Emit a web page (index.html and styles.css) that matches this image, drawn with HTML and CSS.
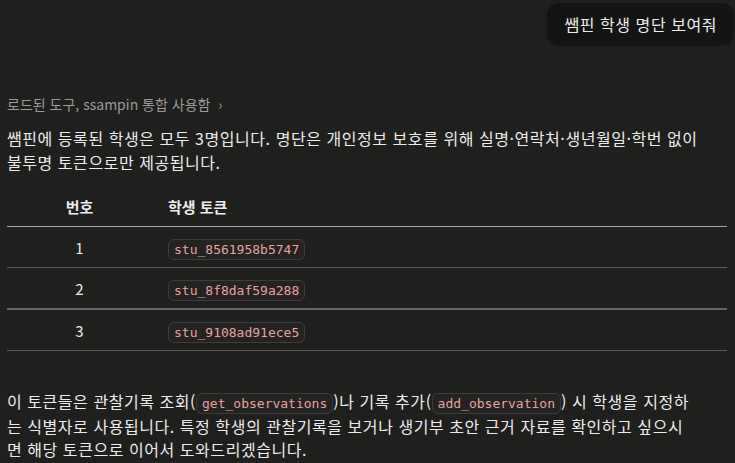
FILE: index.html
```html
<!DOCTYPE html>
<html lang="ko">
    <head>
        <meta charset="UTF-8" />
        <link rel="stylesheet" href="styles.css">
    </head>
    <body>
        <div class="chat">
            <div class="user_row">
                <div class="user_bubble">쌤핀 학생 명단 보여줘</div>
            </div>

            <div class="tool_line">로드된 도구, ssampin 통합 사용함 <span class="chev">&#8250;</span></div>

            <p class="answer">쌤핀에 등록된 학생은 모두 3명입니다. 명단은 개인정보 보호를 위해 실명·연락처·생년월일·학번 없이<br>불투명 토큰으로만 제공됩니다.</p>

            <table class="roster">
                <thead>
                    <tr><th class="col_num">번호</th><th class="col_token">학생 토큰</th></tr>
                </thead>
                <tbody>
                    <tr><td class="col_num">1</td><td class="col_token"><code>stu_8561958b5747</code></td></tr>
                    <tr class="thick"><td class="col_num">2</td><td class="col_token"><code>stu_8f8daf59a288</code></td></tr>
                    <tr><td class="col_num">3</td><td class="col_token"><code>stu_9108ad91ece5</code></td></tr>
                </tbody>
            </table>

            <p class="answer after">이 토큰들은 관찰기록 조회(<code>get_observations</code>)나 기록 추가(<code>add_observation</code>) 시 학생을 지정하<br>는 식별자로 사용됩니다. 특정 학생의 관찰기록을 보거나 생기부 초안 근거 자료를 확인하고 싶으시<br>면 해당 토큰으로 이어서 도와드리겠습니다.</p>
        </div>
    </body>
</html>
```

FILE: styles.css
```css
body {
    margin: 0;
    background-color: #1f1f1e;
    color: #ececec;
    font-family: "Noto Sans CJK KR", "Noto Sans", sans-serif;
    font-size: 16px;
}
.chat {
    padding: 3px 1px 0 7px;
}
.user_row {
    display: flex;
    justify-content: flex-end;
}
.user_bubble {
    background-color: #141414;
    border-radius: 12px;
    padding: 0 17px;
    height: 43px;
    line-height: 43px;
    letter-spacing: 0.55px;
    white-space: nowrap;
}
.tool_line {
    margin-top: 48px;
    color: #9a9a98;
    font-size: 14px;
    line-height: 20px;
}
.chev {
    margin-left: 4px;
}
.answer {
    margin: 12px 0 0 0;
    line-height: 24px;
    width: 722px;
    letter-spacing: 0.55px;
    white-space: nowrap;
}
.answer.after {
    margin-top: 39px;
    line-height: 23px;
}
.roster {
    width: 720px;
    margin-top: 12px;
    border-collapse: collapse;
}
.roster th {
    font-weight: bold;
    font-size: 15px;
    height: 40px;
    padding: 0;
    text-align: left;
    border-bottom: 1px solid #a3a3a1;
}
.roster td {
    height: 40px;
    padding: 0;
    font-size: 15px;
    border-bottom: 1px solid #5a5a58;
}
.roster tr.thick td {
    border-bottom: 2px solid #636361;
}
.roster .col_num {
    width: 145px;
    text-align: center;
}
.roster .col_token {
    padding-left: 16px;
    text-align: left;
}
code {
    font-family: "DejaVu Sans Mono", monospace;
    font-size: 13px;
    letter-spacing: 0;
    color: #e8a1a1;
    background-color: #232322;
    border: 1px solid #3c3c3a;
    border-radius: 6px;
    padding: 2px 5px;
}
```
